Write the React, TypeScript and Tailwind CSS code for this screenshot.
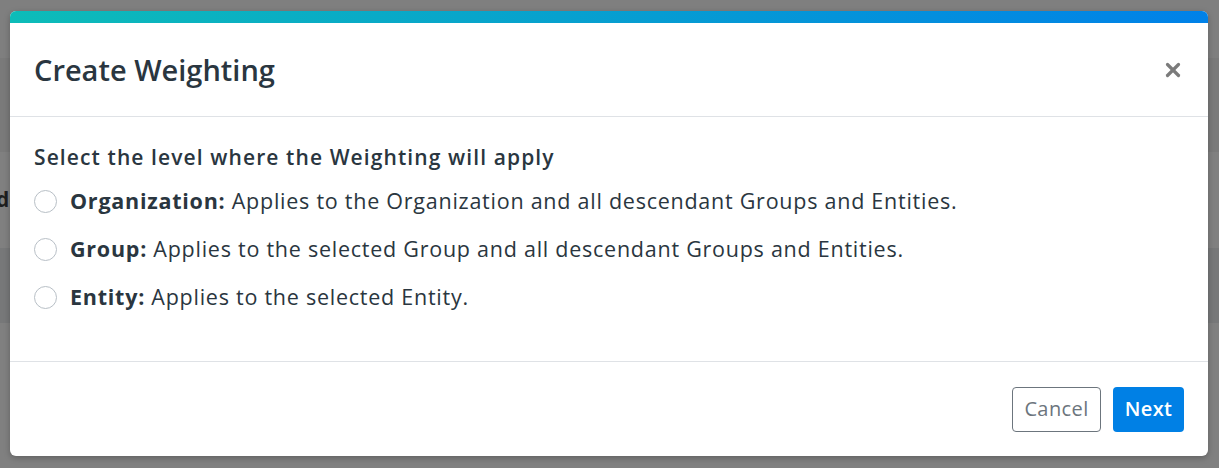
import { X } from "lucide-react";

const options = [
  { label: "Organization:", text: "Applies to the Organization and all descendant Groups and Entities." },
  { label: "Group:", text: "Applies to the selected Group and all descendant Groups and Entities." },
  { label: "Entity:", text: "Applies to the selected Entity." },
];

export default function App() {
  return (
    <div className="relative h-[468px] w-[1219px] overflow-hidden bg-[#808080] font-['Open_Sans',sans-serif] text-[#2a3640]">
      {/* page behind the overlay */}
      <div className="flex flex-col">
        <div className="h-[58px] bg-[#7f7f7f]" />
        <div className="h-[94px] bg-[#7a7a7a]" />
        <div className="flex h-[96px] items-center bg-[#808080] text-[21px] font-bold text-[#1e1e1e]">
          <span className="-ml-[4px]">de</span>
        </div>
        <div className="h-[75px] bg-[#777879]" />
        <div className="flex-1 bg-[#808080]" />
      </div>

      {/* modal */}
      <div className="absolute left-[10px] top-[11px] w-[1198px] overflow-hidden rounded-[6px] bg-white shadow-[0_2px_6px_rgba(0,0,0,0.25)]">
        <div className="h-[12px] bg-[linear-gradient(90deg,#0dbcb8,#0081e8)]" />
        <div className="flex h-[94px] items-center justify-between border-b border-[#dfe2e6] pl-[24px] pr-[24px]">
          <h2 className="text-[29px] font-semibold leading-none">Create Weighting</h2>
          <X className="h-[22px] w-[22px] text-[#7b7b7b]" strokeWidth={3.5} />
        </div>
        <div className="h-[245px] border-b border-[#dfe2e6] pl-[24px] pt-[27px]">
          <p className="text-[21px] font-semibold leading-[26px] tracking-[1.1px]">
            Select the level where the Weighting will apply
          </p>
          <div className="mt-[18px] flex flex-col gap-[22px]">
            {options.map((o) => (
              <label key={o.label} className="flex h-[26px] items-center gap-[13px] text-[21.5px] tracking-[0.75px]">
                <span className="h-[23px] w-[23px] shrink-0 rounded-full border border-[#b8bfc6] bg-white" />
                <span>
                  <b className="font-bold">{o.label}</b> {o.text}
                </span>
              </label>
            ))}
          </div>
        </div>
        <div className="flex h-[94px] items-center justify-end gap-[12px] pr-[24px]">
          <button className="h-[45px] w-[89px] rounded-[4px] border border-[#6c757d] bg-white text-[20px] tracking-[0.4px] text-[#6c757d]">
            Cancel
          </button>
          <button className="h-[45px] w-[71px] rounded-[4px] bg-[#0080e5] text-[20px] font-semibold tracking-[0.4px] text-white">
            Next
          </button>
        </div>
      </div>
    </div>
  );
}
